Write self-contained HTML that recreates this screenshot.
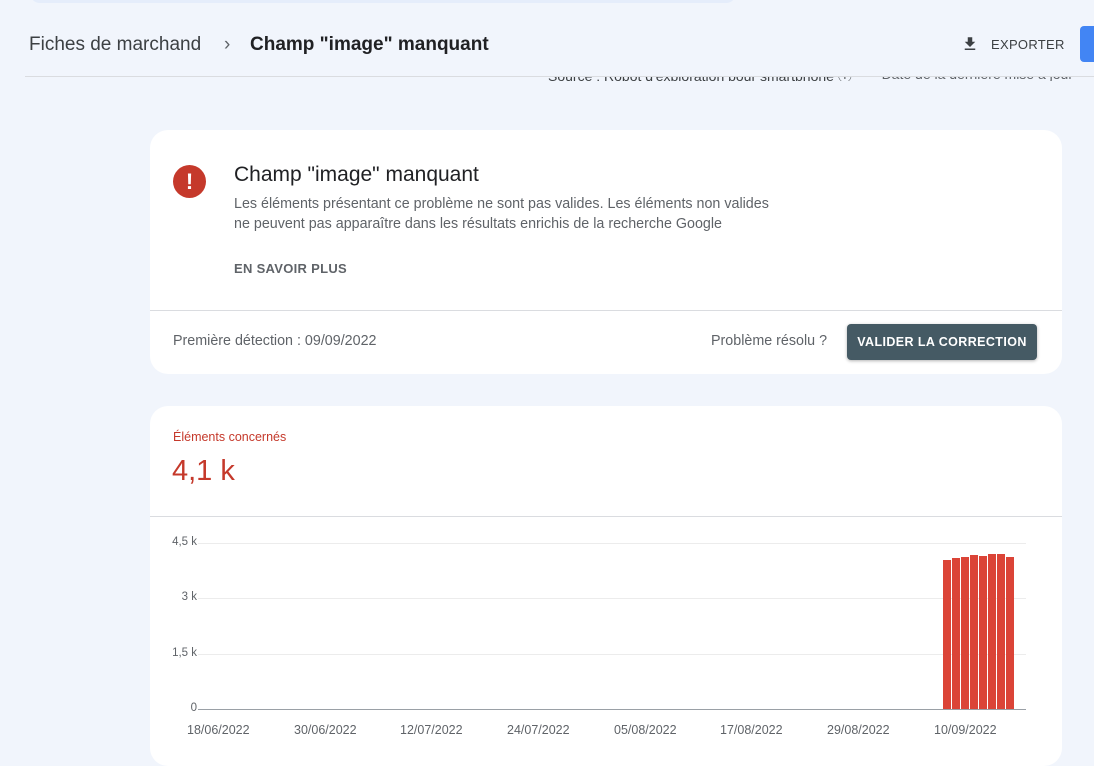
<!DOCTYPE html>
<html><head><meta charset="utf-8"><style>
*{margin:0;padding:0;box-sizing:border-box}
body{width:1094px;height:748px;overflow:hidden;background:#f1f5fc;font-family:"Liberation Sans",Arial,sans-serif;position:relative;color:#202124}
.a{position:absolute;white-space:nowrap}
.card{position:absolute;background:#fff;border-radius:18px}
.bar{position:absolute;background:#db4437;width:8px}
.grid{position:absolute;left:198px;width:828px;height:1px;background:#ececec}
.yl{position:absolute;font-size:11.5px;color:#5f6368;right:897px}
.xl{position:absolute;top:723px;font-size:12.5px;color:#5f6368}
</style></head><body>
<div class="a" style="left:548px;top:66px;font-size:14px;color:#3c4043">Source : Robot d'exploration pour smartphone ⓘ</div>
<div class="a" style="left:866px;top:66px;font-size:14px;color:#5f6368">–&nbsp; Date de la dernière mise à jour</div>
<div class="a" style="left:0;top:81px;width:1094px;height:30px;background:#f1f5fc"></div>
<div class="a" style="left:0;top:0;width:1094px;height:76px;background:#f1f5fc"></div>
<div class="a" style="left:30px;top:-10px;width:706px;height:13px;background:#e5edfb;border-radius:0 0 10px 10px"></div>
<div class="a" style="left:29px;top:34px;font-size:19px;color:#3c4043">Fiches de marchand</div>
<div class="a" style="left:224px;top:34px;font-size:19px;color:#5f6368">›</div>
<div class="a" style="left:250px;top:34px;font-size:19px;color:#202124;font-weight:bold">Champ "image" manquant</div>
<svg class="a" style="left:961px;top:35px" width="18" height="18" viewBox="0 0 24 24"><path d="M19 9h-4V3H9v6H5l7 7 7-7zM5 18v2h14v-2H5z" fill="#3c4043"/></svg>
<div class="a" style="left:991px;top:37px;font-size:13px;color:#3c4043;letter-spacing:0.3px">EXPORTER</div>
<div class="a" style="left:1080px;top:26px;width:20px;height:36px;background:#4285f4;border-radius:4px"></div>
<div class="a" style="left:25px;top:76px;width:1069px;height:1px;background:#dadce0"></div>

<div class="card" style="left:150px;top:130px;width:912px;height:244px">
<div class="a" style="left:23px;top:35px;width:33px;height:33px;border-radius:50%;background:#c5392b;color:#fff;font-weight:bold;font-size:22px;text-align:center;line-height:33px">!</div>
<div class="a" style="left:84px;top:33px;font-size:21px;color:#202124">Champ "image" manquant</div>
<div class="a" style="left:84px;top:64px;font-size:14.3px;color:#5f6368;line-height:20px">Les éléments présentant ce problème ne sont pas valides. Les éléments non valides<br>ne peuvent pas apparaître dans les résultats enrichis de la recherche Google</div>
<div class="a" style="left:84px;top:131px;font-size:13px;color:#5f6368;font-weight:bold;letter-spacing:0.3px">EN SAVOIR PLUS</div>
<div class="a" style="left:0;top:180px;width:912px;height:1px;background:#dadce0"></div>
<div class="a" style="left:23px;top:203px;font-size:14.3px;color:#5f6368">Première détection : 09/09/2022</div>
<div class="a" style="left:561px;top:203px;font-size:14.3px;color:#5f6368">Problème résolu ?</div>
<div class="a" style="left:697px;top:194px;width:190px;height:36px;background:#455a64;border-radius:4px;color:#fff;font-size:12.5px;font-weight:bold;letter-spacing:0.4px;text-align:center;line-height:36px;box-shadow:0 1px 3px rgba(0,0,0,.3)">VALIDER LA CORRECTION</div>
</div>

<div class="card" style="left:150px;top:406px;width:912px;height:360px"></div>
<div class="a" style="left:173px;top:430px;font-size:12.5px;color:#c5392b">Éléments concernés</div>
<div class="a" style="left:172px;top:455px;font-size:29px;color:#c5392b">4,1 k</div>
<div class="a" style="left:150px;top:516px;width:912px;height:1px;background:#dadce0"></div>
<div class="grid" style="top:543px"></div>
<div class="grid" style="top:598px"></div>
<div class="grid" style="top:654px"></div>
<div class="bar" style="left:943px;top:560px;height:149px"></div>
<div class="bar" style="left:952px;top:558px;height:151px"></div>
<div class="bar" style="left:961px;top:557px;height:152px"></div>
<div class="bar" style="left:970px;top:555px;height:154px"></div>
<div class="bar" style="left:979px;top:556px;height:153px"></div>
<div class="bar" style="left:988px;top:554px;height:155px"></div>
<div class="bar" style="left:997px;top:554px;height:155px"></div>
<div class="bar" style="left:1006px;top:557px;height:152px"></div>
<div class="grid" style="top:709px;background:#9aa0a6"></div>
<div class="yl" style="top:536px">4,5 k</div>
<div class="yl" style="top:591px">3 k</div>
<div class="yl" style="top:647px">1,5 k</div>
<div class="yl" style="top:702px">0</div>
<div class="xl" style="left:187px">18/06/2022</div>
<div class="xl" style="left:294px">30/06/2022</div>
<div class="xl" style="left:400px">12/07/2022</div>
<div class="xl" style="left:507px">24/07/2022</div>
<div class="xl" style="left:614px">05/08/2022</div>
<div class="xl" style="left:720px">17/08/2022</div>
<div class="xl" style="left:827px">29/08/2022</div>
<div class="xl" style="left:934px">10/09/2022</div>
</body></html>
